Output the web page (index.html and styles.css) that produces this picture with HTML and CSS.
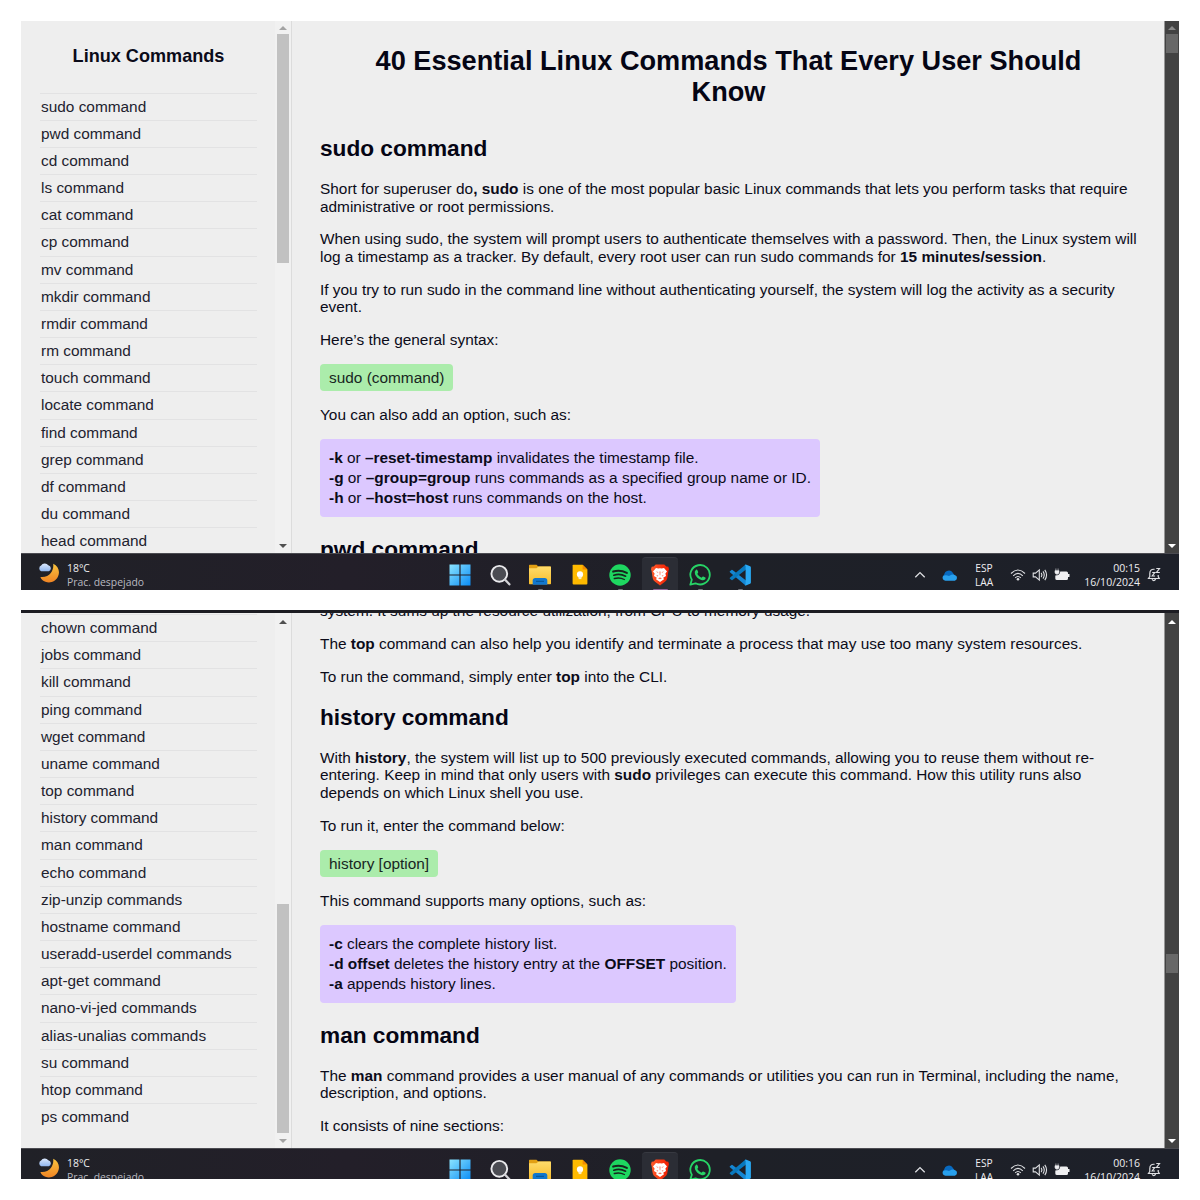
FILE: index.html
```html
<!DOCTYPE html>
<html lang="en">
<head>
<meta charset="utf-8">
<title>Linux Commands</title>
<link rel="stylesheet" href="styles.css">
</head>
<body>
<svg class="defs" aria-hidden="true">
  <defs>
    <linearGradient id="winfill" x1="0" y1="0" x2="1" y2="1"><stop offset="0" stop-color="#8be4ff"/><stop offset="1" stop-color="#0a8cf5"/></linearGradient>
    <linearGradient id="moonfill" x1="0" y1="0" x2="0" y2="1"><stop offset="0" stop-color="#f9c53f"/><stop offset="1" stop-color="#f08424"/></linearGradient>
    <linearGradient id="cloudfill" x1="0" y1="0" x2="0" y2="1"><stop offset="0" stop-color="#dbe8fc"/><stop offset="1" stop-color="#8fb5ee"/></linearGradient>
    <linearGradient id="folderfill" x1="0" y1="0" x2="0" y2="1"><stop offset="0" stop-color="#ffdc6b"/><stop offset="1" stop-color="#f8bd2c"/></linearGradient>
    <linearGradient id="bravefill" x1="0" y1="0" x2="1" y2="0"><stop offset="0" stop-color="#ff5a2a"/><stop offset="1" stop-color="#f01c00"/></linearGradient>
  </defs>
  <symbol id="weather" viewBox="0 0 22 22">
    <path d="M15.2 1.7C20.2 4 22.200 9 20.200 14C18.200 19.200 12.400 21.800 7.400 19.800C5 18.900 3.300 17.400 2.400 15C7 15.500 10.500 14 12.800 11C15 8 15.600 4.700 15.200 1.700Z" fill="url(#moonfill)"/>
    <path d="M3.200 9.300A3.100 3.100 0 0 1 3.100 3.600A4.300 4.300 0 0 1 10.300 3.200A3.200 3.200 0 0 1 10.800 9.300Z" fill="url(#cloudfill)"/>
  </symbol>
  <symbol id="windows" viewBox="0 0 22 22">
    <path d="M.5.5H10.400V10.400H.5ZM11.600.5H21.500V10.400H11.600ZM.5 11.600H10.400V21.500H.5ZM11.600 11.600H21.500V21.500H11.600Z" fill="url(#winfill)"/>
  </symbol>
  <symbol id="search" viewBox="0 0 22 22">
    <circle cx="10.300" cy="9.800" r="7.900" fill="#4b4c53" stroke="#e9e9ec" stroke-width="1.900"/>
    <path d="M15.900 15.500L20.400 20.300" stroke="#d2d2d6" stroke-width="2.300" stroke-linecap="round"/>
  </symbol>
  <symbol id="folder" viewBox="0 0 22 22">
    <path d="M0 1.500Q0 .8.7.800H7.500L9.300 2.500H21.300Q22 2.500 22 3.200V10H0Z" fill="#e2a014"/>
    <path d="M0 4.200H7.500L9.500 2.500H21.300Q22 2.500 22 3.200V19.500Q22 20.300 21.300 20.300H.7Q0 20.300 0 19.500Z" fill="url(#folderfill)"/>
    <path d="M3.700 20.800V16.500Q3.700 13.900 6.300 13.900H15.700Q18.300 13.900 18.300 16.500V20.800Z" fill="#1277ce"/>
    <path d="M7 17.300H15" stroke="#07508f" stroke-width="1"/>
  </symbol>
  <symbol id="keep" viewBox="0 0 22 22">
    <path d="M3.600 1.500Q3.600.7 4.400.7H13.600L18.400 5.500V19.600Q18.400 20.600 17.400 20.600H4.600Q3.600 20.600 3.600 19.600Z" fill="#ffba00"/>
    <path d="M13.600.7L18.400 5.500H13.600Z" fill="#f28b00"/>
    <circle cx="11" cy="10.400" r="3.100" fill="#fff"/><path d="M9.600 12.500H12.400V15.100H9.600Z" fill="#fff0be"/>
  </symbol>
  <symbol id="spotify" viewBox="0 0 22 22">
    <circle cx="11" cy="11" r="10.700" fill="#1ed760"/>
    <g fill="none" stroke="#17251d" stroke-linecap="round"><path d="M4.200 7.600Q11.200 5.500 17.800 8.900" stroke-width="2.100"/><path d="M4.800 11.200Q11 9.300 16.600 12.200" stroke-width="1.700"/><path d="M5.300 14.500Q10.700 13 15.400 15.500" stroke-width="1.400"/></g>
  </symbol>
  <symbol id="brave" viewBox="0 0 22 22">
    <path d="M6.700.4H15.300L17.300 2.500L19.300 2.800L20 5.200L19.400 7L18.300 14.200Q17.800 16.400 15.900 17.800L11 21.600L6.100 17.800Q4.200 16.400 3.700 14.200L2.600 7L2 5.200L2.700 2.800L4.700 2.500Z" fill="url(#bravefill)"/>
    <path d="M7 4.100L9.300 4.600L11 4.200L12.700 4.600L15 4.100L18 7.500L16.400 9.600L17 12L14.200 13.700L15 15.200L11 18.100L7 15.200L7.800 13.700L5 12L5.600 9.600L4 7.500Z" fill="#fff"/>
    <path d="M6.700 7.500L9.400 8L9 8.800ZM15.300 7.500L12.600 8L13 8.800ZM10.500 7.500H11.500L11.300 11.300H10.700ZM7.400 11L9.400 11.800L8.300 12.500ZM14.600 11L12.600 11.800L13.700 12.500ZM9 14.200L11 13.400L13 14.200L11 15.200Z" fill="#ff6a50"/>
  </symbol>
  <symbol id="whatsapp" viewBox="0 0 22 22">
    <path d="M1.300 20.700L2.800 15.800A9.700 9.700 0 1 1 6.500 19.300Z" fill="none" stroke="#27d366" stroke-width="1.800" stroke-linejoin="round"/>
    <path d="M7 5.700Q7.800 5.200 8.300 6L9.200 8.100Q9.400 8.600 8.300 9.900Q9.900 12.600 12.500 13.700Q13.700 12.200 14.200 12.400L16.400 13.500Q17 14 16.200 15.200Q14.700 16.800 12.300 16Q7.600 14.200 6 10.200Q5 7.300 7 5.700Z" fill="#27d366"/>
  </symbol>
  <symbol id="vscode" viewBox="0 0 22 22">
    <path d="M.9 7.300L2.500 6Q3 5.700 3.500 6.100L17 16.500V21.500L16 21L.9 8.300Q.4 7.800.9 7.300Z" fill="#1586d2"/>
    <path d="M.9 14.700L2.500 16Q3 16.300 3.500 15.900L17 5.500V.5L16 1L.9 13.700Q.4 14.200.9 14.700Z" fill="#0878bd"/>
    <path d="M16 1L16.800.4L21.100 2.300Q21.900 2.700 21.900 3.500V18.500Q21.900 19.300 21.100 19.700L16.800 21.600L15.600 20.900Q16.600 21 16.600 20V2Q16.600 1 15.600 1.200Z" fill="#29a8f2"/>
  </symbol>
  <symbol id="chevron" viewBox="0 0 12 10"><path d="M1.300 7.300L6 2.600L10.700 7.300" fill="none" stroke="#dedfe2" stroke-width="1.300"/></symbol>
  <symbol id="onedrive" viewBox="0 0 16 12">
    <path d="M1 8.500A3.300 3.300 0 0 1 2.200 4.600A4.700 4.700 0 0 1 10.800 2.800L13.500 7Z" fill="#0869bf"/>
    <path d="M3.500 10.700A2.900 2.900 0 0 1 1 6.300Q3.500 4.200 7 6.100L9.400 4.700A4 4 0 0 1 13.200 5.200A2.900 2.900 0 0 1 12.800 10.700Z" fill="#28a0ed"/>
  </symbol>
  <symbol id="wifi" viewBox="0 0 16 14"><g fill="none" stroke="#dedfe2" stroke-width="1.100"><path d="M1 5.500Q8-1.500 15 5.500"/><path d="M3.200 7.800Q8 3 12.800 7.800"/><path d="M5.200 9.900Q8 7.100 10.800 9.900"/></g><circle cx="8" cy="11.200" r="1.300" fill="#dedfe2"/></symbol>
  <symbol id="volume" viewBox="0 0 16 14"><g fill="none" stroke="#dedfe2" stroke-width="1.100"><path d="M1.200 5.100H3.500L7.300 1.900V12.100L3.500 8.900H1.200Z"/><path d="M9.200 4.900Q10.700 7 9.200 9.100"/><path d="M11 3.400Q13.500 7 11 10.600"/><path d="M12.800 1.900Q16.300 7 12.800 12.100"/></g></symbol>
  <symbol id="battery" viewBox="0 0 16 14"><path d="M6.300 3.600H12.500Q14 3.600 14 5.100V6H15.500V9H14V10.500Q14 12 12.500 12H3Q1.300 12 1.300 10.500V7.500Q5.500 8 6.300 3.600Z" fill="#efeff1"/><path d="M1 2.700H5V4.500Q5 6 3 6Q1 6 1 4.500ZM1.900.5V3M4.100.5V3M3 6V10" fill="#efeff1" stroke="#efeff1" stroke-width=".6"/></symbol>
  <symbol id="bell" viewBox="0 0 14 15"><path d="M7.500 2.300Q2.800 1.800 2.800 6.500V9.600L1.500 11.500H12.200L11.200 9.600V8" fill="none" stroke="#dedfe2" stroke-width="1.200"/><path d="M5 12.200Q6.800 15 8.700 12.200M5.200 5.500H7.700L5.200 9H8M9.300 1.500H12.500L9.500 5.500H12.800" fill="none" stroke="#dedfe2" stroke-width="1.200"/></symbol>
</svg>

<main class="shots">
  <section class="shot shot-first">
    <div class="page">
      <nav class="sidebar">
        <h3 class="sidebar-title">Linux Commands</h3>
        <ul class="list">
          <li>sudo command</li><li>pwd command</li><li>cd command</li><li>ls command</li><li>cat command</li><li>cp command</li><li>mv command</li><li>mkdir command</li><li>rmdir command</li><li>rm command</li><li>touch command</li><li>locate command</li><li>find command</li><li>grep command</li><li>df command</li><li>du command</li><li>head command</li>
        </ul>
      </nav>
      <div class="bar bar-light at-start"><i class="up dim"></i><i class="thumb"></i><i class="down"></i></div>
      <article class="content">
        <h1>40 Essential Linux Commands That Every User Should<br>Know</h1>
        <h2>sudo command</h2>
        <p>Short for superuser do<b>, sudo</b> is one of the most popular basic Linux commands that lets you perform tasks that require<br>administrative or root permissions.</p>
        <p>When using sudo, the system will prompt users to authenticate themselves with a password. Then, the Linux system will<br>log a timestamp as a tracker. By default, every root user can run sudo commands for <b>15 minutes/session</b>.</p>
        <p>If you try to run sudo in the command line without authenticating yourself, the system will log the activity as a security<br>event.</p>
        <p>Here’s the general syntax:</p>
        <div class="syntax">sudo (command)</div>
        <p>You can also add an option, such as:</p>
        <div class="options"><b>-k</b> or <b>–reset-timestamp</b> invalidates the timestamp file.<br><b>-g</b> or <b>–group=group</b> runs commands as a specified group name or ID.<br><b>-h</b> or <b>–host=host</b> runs commands on the host.</div>
        <h2>pwd command</h2>
      </article>
      <div class="bar bar-dark at-start"><i class="up dim"></i><i class="thumb"></i><i class="down"></i></div>
    </div>
    <footer class="taskbar">
      <svg class="weather"><use href="#weather"/></svg>
      <div class="forecast">18°C<br><span class="faded">Prac. despejado</span></div>
      <div class="apps">
        <span><svg><use href="#windows"/></svg></span><span><svg><use href="#search"/></svg></span><span class="open"><svg><use href="#folder"/></svg></span><span><svg><use href="#keep"/></svg></span><span class="open"><svg><use href="#spotify"/></svg></span><span class="active"><svg><use href="#brave"/></svg></span><span class="open"><svg><use href="#whatsapp"/></svg></span><span class="open"><svg><use href="#vscode"/></svg></span>
      </div>
      <div class="tray">
        <svg class="chevron"><use href="#chevron"/></svg><svg class="onedrive"><use href="#onedrive"/></svg>
        <div class="lang">ESP<br>LAA</div>
        <svg class="status"><use href="#wifi"/></svg><svg class="status"><use href="#volume"/></svg><svg class="status"><use href="#battery"/></svg>
        <div class="clock">00:15<br>16/10/2024</div>
        <svg class="bell"><use href="#bell"/></svg>
      </div>
    </footer>
  </section>

  <section class="shot shot-second">
    <div class="page">
      <nav class="sidebar">
        <ul class="list">
          <li>chown command</li><li>jobs command</li><li>kill command</li><li>ping command</li><li>wget command</li><li>uname command</li><li>top command</li><li>history command</li><li>man command</li><li>echo command</li><li>zip-unzip commands</li><li>hostname command</li><li>useradd-userdel commands</li><li>apt-get command</li><li>nano-vi-jed commands</li><li>alias-unalias commands</li><li>su command</li><li>htop command</li><li>ps command</li>
        </ul>
      </nav>
      <div class="bar bar-light at-end"><i class="up"></i><i class="thumb"></i><i class="down dim"></i></div>
      <article class="content">
        <p>system. It sums up the resource utilization, from CPU to memory usage.</p>
        <p>The <b>top</b> command can also help you identify and terminate a process that may use too many system resources.</p>
        <p>To run the command, simply enter <b>top</b> into the CLI.</p>
        <h2>history command</h2>
        <p>With <b>history</b>, the system will list up to 500 previously executed commands, allowing you to reuse them without re-<br>entering. Keep in mind that only users with <b>sudo</b> privileges can execute this command. How this utility runs also<br>depends on which Linux shell you use.</p>
        <p>To run it, enter the command below:</p>
        <div class="syntax">history [option]</div>
        <p>This command supports many options, such as:</p>
        <div class="options"><b>-c</b> clears the complete history list.<br><b>-d offset</b> deletes the history entry at the <b>OFFSET</b> position.<br><b>-a</b> appends history lines.</div>
        <h2>man command</h2>
        <p>The <b>man</b> command provides a user manual of any commands or utilities you can run in Terminal, including the name,<br>description, and options.</p>
        <p>It consists of nine sections:</p>
      </article>
      <div class="bar bar-dark at-middle"><i class="up"></i><i class="thumb"></i><i class="down"></i></div>
    </div>
    <footer class="taskbar">
      <svg class="weather"><use href="#weather"/></svg>
      <div class="forecast">18°C<br><span class="faded">Prac. despejado</span></div>
      <div class="apps">
        <span><svg><use href="#windows"/></svg></span><span><svg><use href="#search"/></svg></span><span><svg><use href="#folder"/></svg></span><span><svg><use href="#keep"/></svg></span><span><svg><use href="#spotify"/></svg></span><span class="active"><svg><use href="#brave"/></svg></span><span><svg><use href="#whatsapp"/></svg></span><span><svg><use href="#vscode"/></svg></span>
      </div>
      <div class="tray">
        <svg class="chevron"><use href="#chevron"/></svg><svg class="onedrive"><use href="#onedrive"/></svg>
        <div class="lang">ESP<br>LAA</div>
        <svg class="status"><use href="#wifi"/></svg><svg class="status"><use href="#volume"/></svg><svg class="status"><use href="#battery"/></svg>
        <div class="clock">00:16<br>16/10/2024</div>
        <svg class="bell"><use href="#bell"/></svg>
      </div>
    </footer>
  </section>
</main>
</body>
</html>
```
FILE: styles.css
```css
* { box-sizing: border-box; }
body { margin: 0; width: 1200px; height: 1200px; overflow: hidden; background: #fff; font-family: "Liberation Sans", Arial, sans-serif; }
.defs { position: absolute; width: 0; height: 0; }
.shots { padding: 21px; display: flex; flex-direction: column; gap: 20px; }
.shot { width: 1158px; overflow: hidden; background: #20222a; display: flex; flex-direction: column; }
.shot-first { height: 569px; }
.shot-second { height: 569px; border-top: 3px solid #1c1c22; }
.page { display: grid; grid-template-columns: 254px 16px 873px 15px; flex: none; overflow: hidden; background: #eee; color: #0b0b19; }
.shot-first .page { height: 532px; }
.shot-second .page { height: 535px; }

.sidebar { overflow: hidden; padding-left: 19px; }
.sidebar-title { margin: 0; width: 217px; height: 71.5px; padding-top: 24px; font-size: 18.1px; line-height: 22px; text-align: center; white-space: nowrap; }
.list { margin: 0; padding: 0; list-style: none; width: 217px; font-size: 15.4px; color: #22222e; }
.list li { height: 27.18px; padding-left: 1px; border-top: 1px solid #e2e2e3; line-height: 26.500px; white-space: nowrap; }
.shot-second .list { padding-top: 1px; }

.content { overflow: hidden; padding-left: 28px; border-left: 1px solid #dcdcdc; font-size: 15.4px; line-height: 17.55px; white-space: nowrap; }
.content p { margin: 0 0 15.3px; }
h1 { margin: 0 27px 0 0; padding-top: 24px; font-size: 27.15px; line-height: 31px; text-align: center; color: #050514; }
.content h1 + h2 { margin-top: 28px; }
h2 { margin: 18.500px 0 19px; font-size: 22.65px; line-height: 26px; color: #050514; }
.syntax { width: fit-content; height: 27px; margin-bottom: 15.3px; padding: 0 9px; border-radius: 4px; background: #abecab; line-height: 27px; color: #18261f; }
.options { width: fit-content; height: 78px; margin-bottom: 19px; padding: 9px 9px; border-radius: 4px; background: #dcc8ff; line-height: 20px; }
.shot-second .content p:first-child { margin-top: -11px; }

.bar { display: grid; justify-items: center; }
.bar-light { background: #f1f1f1; padding-right: 1px; }
.bar-dark { background: #424242; border-left: 1px solid #969696; }
.bar i { display: block; }
.up, .down { width: 0; height: 0; border: 4px solid transparent; align-self: center; }
.up { border-bottom: 4px solid #505050; border-top: 0; }
.down { border-top: 4px solid #505050; border-bottom: 0; }
.bar-dark .up { border-bottom-color: #fff; }
.bar-dark .down { border-top-color: #fff; }
.bar-light .dim { border-bottom-color: #a3a3a3; border-top-color: #a3a3a3; }
.bar-dark .dim { border-bottom-color: #8a8a8a; }
.thumb { width: 12px; background: #c1c1c1; }
.bar-dark .thumb { background: #686868; }
.bar-light.at-start { grid-template-rows: 13px 229px 1fr; }
.bar-light.at-start .down, .bar-dark .down, .bar-light.at-end .down { align-self: end; margin-bottom: 5px; }
.bar-dark.at-start { grid-template-rows: 13px 19px 1fr; }
.bar-light.at-end { grid-template-rows: 291px 229px 1fr; }
.bar-dark.at-middle { grid-template-rows: 341px 19px 1fr; }
.at-end .up, .at-middle .up { align-self: start; margin-top: 7px; }

.taskbar { flex: none; height: 48px; display: flex; background: linear-gradient(90deg, #202127, #231f29 28%, #1e2027 60%, #1d2029); border-top: 1px solid #4b4b51; color: #eeeef1; font: 10.500px/14px "Open Sans", "Noto Sans", sans-serif; overflow: hidden; }
.taskbar svg { display: block; flex: none; }
.weather { width: 22px; height: 22px; margin: 8px 0 0 17px; }
.forecast { width: 374px; padding: 7px 0 0 7px; font-size: 10.400px; }
.faded { color: #b9bac0; }
.apps { display: flex; padding-left: 6px; width: 326px; }
.apps span { width: 36px; height: 40px; margin: 3px 2px 0; padding: 7px 7px 0; border-radius: 4px 4px 0 0; }
.apps svg { width: 22px; height: 22px; }
.apps .active { background: #2b2d35; border-top: 1px solid #373941; padding-top: 6px; }
.apps .active::after, .apps .open::after { content: ""; display: block; width: 5px; height: 3px; margin: 3px auto 0; background: #74767c; border-radius: 1px; }
.apps .active::after { width: 15px; background: #8d6496; }
.tray { display: flex; margin-left: 154px; padding-top: 7px; }
.chevron { width: 12px; height: 10px; margin: 9px 16px 0 0; }
.onedrive { width: 16px; height: 12px; margin-top: 9px; }
.lang { width: 52px; text-align: center; font-size: 10.200px; }
.status { width: 16px; height: 14px; margin: 7px 6px 0 0; }
.status + .status + .status { margin-right: 5px; }
.clock { width: 65px; text-align: right; }
.bell { width: 14px; height: 15px; margin: 6px 0 0 7px; }
```
